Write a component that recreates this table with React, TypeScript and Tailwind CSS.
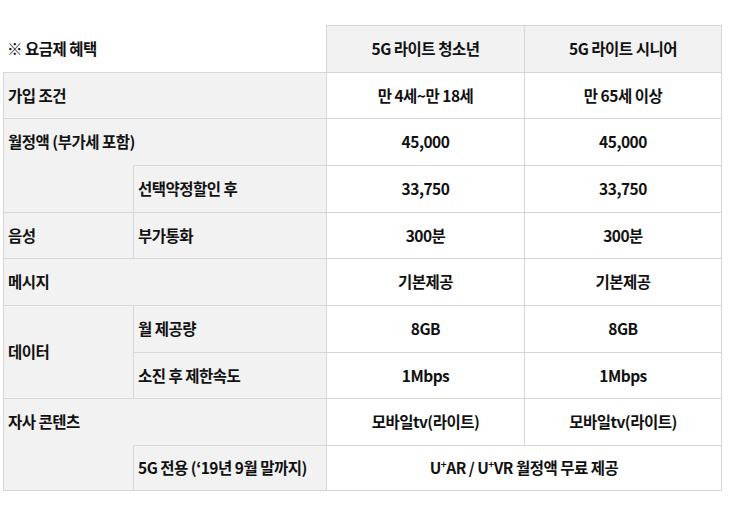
import type { ReactNode } from "react";

// 셀 하나. 테두리와 배경은 각 셀이 직접 정한다 (병합 영역은 위쪽 선을 뺀다).
type CellProps = {
  className: string;
  center?: boolean;
  children?: ReactNode;
};

function Cell({ className, center = false, children }: CellProps) {
  return (
    <div
      className={`flex items-center border-[#d6d6d6] ${
        center ? "justify-center" : "pl-[4px]"
      } ${className}`}
    >
      {children}
    </div>
  );
}

function Plus() {
  return <span className="relative -top-[5px] text-[10px]">+</span>;
}

export default function App() {
  const label = "bg-[#f2f2f2] border-t border-l";
  const value = "bg-white border-t border-l";
  const valueLast = "bg-white border-t border-l border-r";

  return (
    <div className="min-h-screen bg-white pt-[25px] pl-[3px] font-['Noto_Sans_CJK_KR',sans-serif] text-[15.5px] font-bold tracking-[-0.5px] text-[#111]">
      <div className="grid w-[719px] grid-cols-[130px_193px_198px_198px] grid-rows-[47px_46px_47px_47px_46px_47px_47px_46px_47px_46px]">
        {/* 1 */}
        <Cell className="col-span-2 bg-white">※ 요금제 혜택</Cell>
        <Cell center className={label}>5G 라이트 청소년</Cell>
        <Cell center className={`${label} border-r`}>5G 라이트 시니어</Cell>

        {/* 2 */}
        <Cell className={`col-span-2 ${label}`}>가입 조건</Cell>
        <Cell center className={value}>만 4세~만 18세</Cell>
        <Cell center className={valueLast}>만 65세 이상</Cell>

        {/* 3 */}
        <Cell className={`col-span-2 ${label}`}>월정액 (부가세 포함)</Cell>
        <Cell center className={value}>45,000</Cell>
        <Cell center className={valueLast}>45,000</Cell>

        {/* 4 */}
        <Cell className="bg-[#f2f2f2] border-l" />
        <Cell className={label}>선택약정할인 후</Cell>
        <Cell center className={value}>33,750</Cell>
        <Cell center className={valueLast}>33,750</Cell>

        {/* 5 */}
        <Cell className={label}>음성</Cell>
        <Cell className={label}>부가통화</Cell>
        <Cell center className={value}>300분</Cell>
        <Cell center className={valueLast}>300분</Cell>

        {/* 6 */}
        <Cell className={`col-span-2 ${label}`}>메시지</Cell>
        <Cell center className={value}>기본제공</Cell>
        <Cell center className={valueLast}>기본제공</Cell>

        {/* 7-8 */}
        <Cell className={`row-span-2 ${label}`}>데이터</Cell>
        <Cell className={label}>월 제공량</Cell>
        <Cell center className={value}>8GB</Cell>
        <Cell center className={valueLast}>8GB</Cell>
        <Cell className={label}>소진 후 제한속도</Cell>
        <Cell center className={value}>1Mbps</Cell>
        <Cell center className={valueLast}>1Mbps</Cell>

        {/* 9 */}
        <Cell className={`col-span-2 ${label}`}>자사 콘텐츠</Cell>
        <Cell center className={value}>모바일tv(라이트)</Cell>
        <Cell center className={valueLast}>모바일tv(라이트)</Cell>

        {/* 10 */}
        <Cell className="bg-[#f2f2f2] border-l border-b" />
        <Cell className={`${label} border-b`}>5G 전용 (‘19년 9월 말까지)</Cell>
        <Cell center className={`col-span-2 ${valueLast} border-b`}>
          U<Plus />AR / U<Plus />VR 월정액 무료 제공
        </Cell>
      </div>
    </div>
  );
}
